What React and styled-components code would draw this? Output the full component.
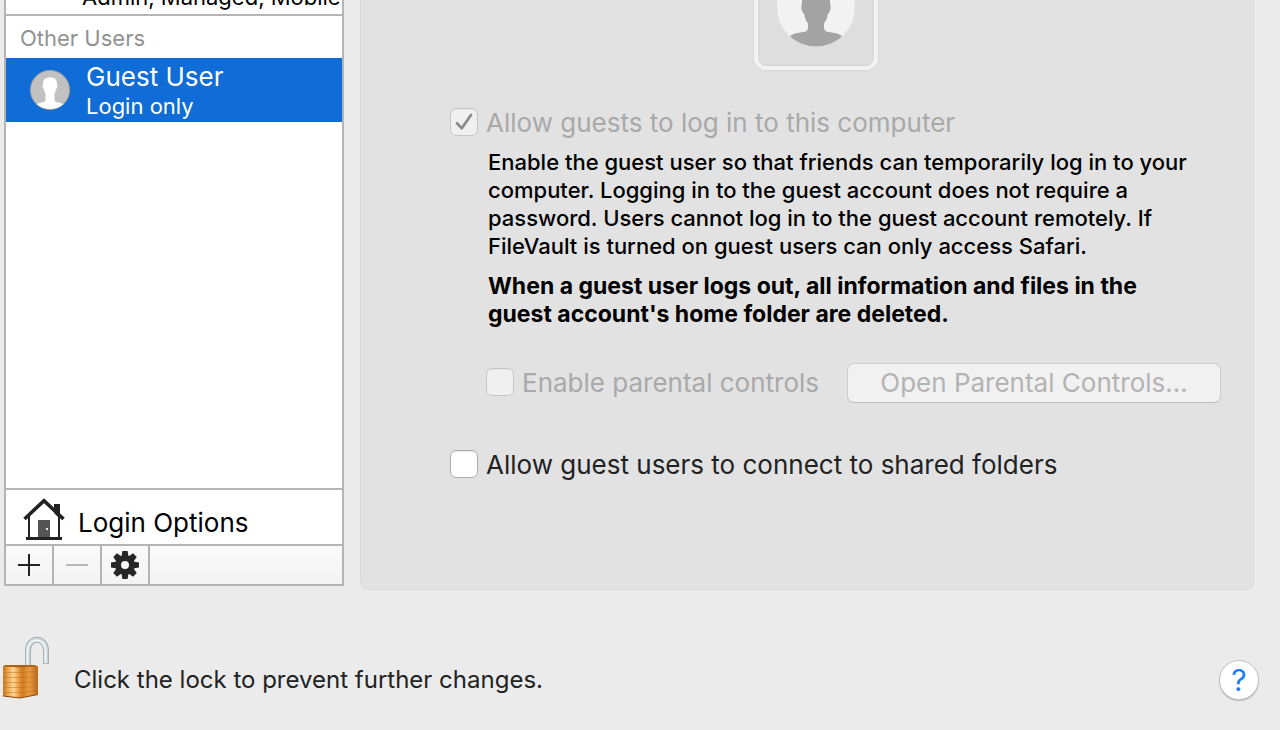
import React from "react";
import styled, { createGlobalStyle } from "styled-components";

const Global = createGlobalStyle`
  * { box-sizing: border-box; }
  body {
    margin: 0;
    background: #ebebeb;
    color: #222;
    font-family: Inter, "Liberation Sans", Helvetica, Arial, sans-serif;
    font-size: 26px;
    line-height: 32px;
  }
  button, input { font: inherit; margin: 0; }
  p { margin: 0; }
`;

const Page = styled.main`
  display: flex;
  flex-direction: column;
  min-height: 100vh;
  overflow: hidden;
`;

const Columns = styled.div`
  display: flex;
  align-items: flex-start;
  gap: 16px;
  padding: 0 26px 0 4px;
`;

const Sidebar = styled.aside`
  flex: 0 0 340px;
  display: flex;
  flex-direction: column;
  border: solid #b4b4b4;
  border-width: 0 2px 2px;
  background: #fff;
  color: #000;
`;

const ClippedRow = styled.div`
  display: flex;
  align-items: flex-end;
  height: 16px;
  padding: 0 0 4px 76px;
  overflow: hidden;
  border-bottom: 2px solid #b4b4b4;
  font-size: 22px;
  line-height: 26px;
  white-space: nowrap;
`;

const GroupTitle = styled.h2`
  margin: 0;
  padding: 6px 14px 4px;
  color: #929292;
  font-size: 22px;
  font-weight: 400;
`;

const UserRow = styled.button`
  display: flex;
  align-items: center;
  gap: 16px;
  height: 64px;
  padding: 0 24px;
  border: 0;
  background: #106cd6;
  color: #fff;
  text-align: left;
`;

const UserText = styled.span`
  display: flex;
  flex-direction: column;
  padding-top: 2px;
`;

const UserName = styled.span`
  line-height: 30px;
`;

const UserRole = styled.span`
  font-size: 22px;
  line-height: 28px;
`;

const EmptyList = styled.div`
  min-height: 366px;
`;

const LoginOptions = styled.button`
  display: flex;
  align-items: flex-end;
  gap: 12px;
  height: 56px;
  padding: 0 16px 3px;
  border: 0;
  border-top: 2px solid #b4b4b4;
  background: #fff;
  color: #000;
  text-align: left;
`;

const LoginLabel = styled.span`
  line-height: 36px;
`;

const Toolbar = styled.div`
  display: flex;
  height: 40px;
  border-top: 2px solid #b4b4b4;
  background: linear-gradient(#fafafa, #f3f3f3);
`;

const ToolButton = styled.button`
  display: flex;
  align-items: center;
  justify-content: center;
  width: 48px;
  padding: 0;
  border: 0;
  border-right: 2px solid #b4b4b4;
  background: transparent;
`;

const Panel = styled.section`
  flex: 1;
  min-width: 0;
  padding: 0 32px 111px 89px;
  border: 1px solid #dadada;
  border-top: 0;
  border-radius: 0 0 8px 8px;
  background: #e2e2e2;
`;

const PictureRow = styled.div`
  display: flex;
  justify-content: center;
  padding: 0 40px 38px 0;
`;

const PictureWell = styled.div`
  display: flex;
  justify-content: center;
  width: 124px;
  height: 70px;
  border: 4px solid #f2f2f2;
  border-top: 0;
  border-radius: 0 0 12px 12px;
  background: #dedede;
  box-shadow: 0 0 1px 1px #d9d9d9, inset 0 -1px 2px #d2d2d2;
`;

const Field = styled.label`
  display: flex;
  align-items: center;
  gap: 8px;
  height: 28px;
  color: ${(p) => (p.$muted ? "#a9a9a9" : "#222")};
  white-space: nowrap;
`;

const FieldText = styled.span`
  padding-top: 2px;
`;

const BoxWrap = styled.span`
  position: relative;
  display: flex;
`;

const Box = styled.input`
  appearance: none;
  width: 28px;
  height: 28px;
  border: 1px solid #adadad;
  border-radius: 6px;
  background: #fff;
  box-shadow: inset 0 1px 1px #e4e4e4;
  &:disabled {
    border-color: #c6c6c6;
    background: #f0f0f0;
  }
`;

const Tick = styled.svg`
  position: absolute;
  inset: 0;
  pointer-events: none;
`;

const Notes = styled.div`
  display: flex;
  flex-direction: column;
  gap: 12px;
  max-width: 760px;
  padding: 12px 0 35px 38px;
  color: #000;
  font-size: 22px;
  font-weight: 500;
  line-height: 28px;
`;

const Warning = styled.p`
  max-width: 680px;
  font-size: 23px;
  font-weight: 700;
`;

const ParentalRow = styled.div`
  display: flex;
  align-items: center;
  justify-content: space-between;
  margin-bottom: 47px;
  padding-left: 36px;

  ${Field} {
    margin-bottom: 2px;
  }
`;

const OpenButton = styled.button`
  width: 374px;
  height: 40px;
  padding: 0;
  border: 1px solid #cbcbcb;
  border-bottom-color: #bdbdbd;
  border-radius: 7px;
  background: #f1f1f1;
  color: #b3b3b3;
`;

const Footer = styled.footer`
  display: flex;
  align-items: center;
  padding: 46px 21px 0 2px;
`;

const LockButton = styled.button`
  display: flex;
  padding: 0;
  border: 0;
  background: transparent;
`;

const LockText = styled.p`
  flex: 1;
  padding: 24px 0 0 24px;
  font-size: 24px;
`;

const HelpButton = styled.button`
  width: 40px;
  height: 40px;
  margin-top: 24px;
  padding: 0;
  border: 1px solid #c4c4c4;
  border-radius: 50%;
  background: #fff;
  box-shadow: 0 1px 1px #b8b8b8;
  color: #157efb;
  font-size: 30px;
`;

function CheckBox({ label, muted, ...rest }) {
  return (
    <Field $muted={muted}>
      <BoxWrap>
        <Box type="checkbox" disabled={muted} {...rest} />
        {rest.defaultChecked && (
          <Tick width="28" height="28" viewBox="0 0 28 28" aria-hidden="true">
            <path d="M7 15.2 11.8 20.3 21 7" fill="none" stroke="#8b8b8b" strokeWidth="2.8" strokeLinecap="round" strokeLinejoin="round" />
          </Tick>
        )}
      </BoxWrap>
      <FieldText>{label}</FieldText>
    </Field>
  );
}

function GuestAvatar() {
  return (
    <svg width="40" height="40" viewBox="0 0 40 40" aria-hidden="true">
      <circle cx="20" cy="20" r="19.5" fill="#c1c1c1" stroke="#aaa59e" />
      <path d="M20 7.200c-5 0-7.400 3-7 7.500-.8.400-.5 3.700.9 4.300.4 2 .9 3.300 1.600 4.400v6c0 3.500-5.600 2.800-9 4.700A19 19 0 0 0 20 39a19 19 0 0 0 13.500-4.900c-3.400-1.900-9-1.200-9-4.700v-6c.7-1.100 1.200-2.400 1.600-4.400 1.400-.6 1.700-3.900.9-4.300.4-4.500-2-7.500-7-7.500z" fill="#fff" />
    </svg>
  );
}

function LargeAvatar() {
  return (
    <svg width="80" height="48" viewBox="0 0 80 48" aria-hidden="true">
      <defs>
        <clipPath id="disc"><circle cx="40" cy="7.500" r="39" /></clipPath>
      </defs>
      <circle cx="40" cy="7.500" r="39" fill="#f2f2f2" />
      <path clipPath="url(#disc)" d="M26 0v4C24.600 5 25.200 12.500 28.200 14c.5 4 1.800 7 3.800 9.500v4c0 5-5 4.500-9 5.300-4 .8-7 1.500-10 4V48h54V36.800c-3-2.500-6-3.200-10-4-4-.8-9-.3-9-5.300v-4c2-2.500 3.300-5.500 3.800-9.500 3-1.500 3.600-9 2.200-10V0z" fill="#a3a3a3" />
    </svg>
  );
}

function HouseIcon() {
  return (
    <svg width="44" height="44" viewBox="0 0 44 44" aria-hidden="true">
      <path d="M7 19 22 6 37 19V41H7z" fill="#fff" />
      <path d="M32 7h6v15l-6-6z" fill="#222" />
      <path d="M7 18v23M37 18v23" stroke="#222" strokeWidth="2" />
      <path d="M2.500 22 22 3.700 41.500 22" fill="none" stroke="#222" strokeWidth="3.600" />
      <path d="M4 40h36v3H4z" fill="#222" />
      <path d="M16 23h12v17H16z" fill="#555" />
      <path d="M24 31h2v2h-2z" fill="#e8e8e8" />
    </svg>
  );
}

function GearIcon() {
  return (
    <svg width="28" height="28" viewBox="-14 -14 28 28" aria-hidden="true">
      {[0, 45, 90, 135].map((a) => (
        <path key={a} transform={`rotate(${a})`} d="M-2.600-14h5.200l1 6v16l-1 6h-5.200l-1-6V-8z" fill="#262626" />
      ))}
      <circle r="9.800" fill="#262626" />
      <circle r="4" fill="#f8f8f8" />
    </svg>
  );
}

function LockIcon() {
  return (
    <svg width="48" height="64" viewBox="0 0 48 64" aria-hidden="true">
      <defs>
        <linearGradient id="brass" x1="0" x2="1">
          <stop offset="0" stopColor="#c8741c" />
          <stop offset=".15" stopColor="#eda850" />
          <stop offset=".3" stopColor="#ffd595" />
          <stop offset=".46" stopColor="#e89a3c" />
          <stop offset=".55" stopColor="#d07a1e" />
          <stop offset=".75" stopColor="#e89c42" />
          <stop offset="1" stopColor="#b8681a" />
        </linearGradient>
      </defs>
      <path d="M26 33V15c0-15 18-15 18 0v13" fill="none" stroke="#9ba7ac" strokeWidth="6" />
      <path d="M26 33V15c0-15 18-15 18 0v12.500" fill="none" stroke="#c9d3d7" strokeWidth="4.600" />
      <path d="M25.500 33V15c0-14.500 18-14.500 18 0v12" fill="none" stroke="#f0f4f5" strokeWidth="2" />
      <path d="M1 30.500 3 29h29l4 1.500v28L18 62 1 60z" fill="url(#brass)" />
      <path d="M1 30.500 3 29h29l4 1.500-18 1z" fill="#a8641c" />
      <path d="M2 36.500h16l17-1M2 41.500h16l17-1M2 46.500h16l17-1M2 51.500h16l17-1M2 56.500h16l17-2" fill="none" stroke="#bd6d1b" strokeWidth="1.200" opacity=".5" />
      <path d="M1 60l17 2L36 58.500" fill="none" stroke="#8c480c" />
    </svg>
  );
}

export default function App() {
  return (
    <>
      <Global />
      <Page>
        <Columns>
          <Sidebar>
            <ClippedRow>Admin, Managed, Mobile</ClippedRow>
            <GroupTitle>Other Users</GroupTitle>
            <UserRow type="button">
              <GuestAvatar />
              <UserText>
                <UserName>Guest User</UserName>
                <UserRole>Login only</UserRole>
              </UserText>
            </UserRow>
            <EmptyList />
            <LoginOptions type="button">
              <HouseIcon />
              <LoginLabel>Login Options</LoginLabel>
            </LoginOptions>
            <Toolbar>
              <ToolButton type="button" aria-label="Add user">
                <svg width="22" height="22" viewBox="0 0 22 22"><path d="M0 11h22M11 0v22" stroke="#222" strokeWidth="2" /></svg>
              </ToolButton>
              <ToolButton type="button" aria-label="Remove user" disabled>
                <svg width="22" height="22" viewBox="0 0 22 22"><path d="M0 11h22" stroke="#b8b8b8" strokeWidth="2" /></svg>
              </ToolButton>
              <ToolButton type="button" aria-label="Actions">
                <GearIcon />
              </ToolButton>
            </Toolbar>
          </Sidebar>
          <Panel>
            <PictureRow>
              <PictureWell><LargeAvatar /></PictureWell>
            </PictureRow>
            <CheckBox label="Allow guests to log in to this computer" muted defaultChecked />
            <Notes>
              <p>
                Enable the guest user so that friends can temporarily log in to your computer. Logging in to the
                guest account does not require a password. Users cannot log in to the guest account remotely. If
                FileVault is turned on guest users can only access Safari.
              </p>
              <Warning>
                When a guest user logs out, all information and files in the guest account's home folder are deleted.
              </Warning>
            </Notes>
            <ParentalRow>
              <CheckBox label="Enable parental controls" muted />
              <OpenButton type="button" disabled>Open Parental Controls…</OpenButton>
            </ParentalRow>
            <CheckBox label="Allow guest users to connect to shared folders" />
          </Panel>
        </Columns>
        <Footer>
          <LockButton type="button" aria-label="Lock"><LockIcon /></LockButton>
          <LockText>Click the lock to prevent further changes.</LockText>
          <HelpButton type="button" aria-label="Help">?</HelpButton>
        </Footer>
      </Page>
    </>
  );
}
